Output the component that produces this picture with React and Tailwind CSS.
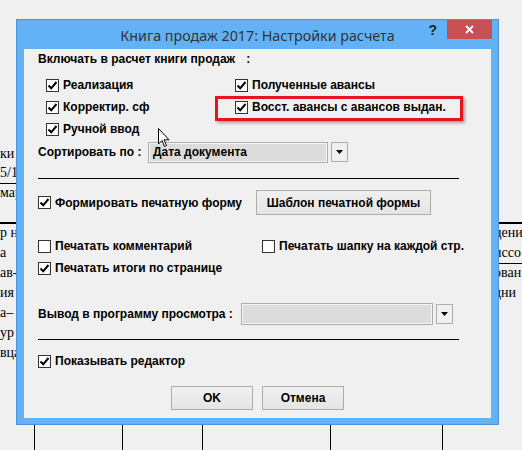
import React from 'react';

const SANS = { fontFamily: '"Liberation Sans", Arial, sans-serif' };

function Check({ checked }) {
  return (
    <span className="w-[13px] h-[13px] border border-[#333] bg-white flex items-center justify-center shrink-0">
      {checked && (
        <svg width="11" height="11" viewBox="0 0 11 11">
          <path d="M1.5 5.5 L4.2 8.3 L9.5 2" fill="none" stroke="#000" strokeWidth="2" />
        </svg>
      )}
    </span>
  );
}

function Box({ label, checked }) {
  return (
    <div className="flex items-center gap-[4px] h-[22px]">
      <Check checked={checked} />
      <span className="text-[12px] font-bold text-black leading-none whitespace-nowrap">{label}</span>
    </div>
  );
}

function DropBtn() {
  return (
    <div className="w-[17px] h-[20px] border border-[#adadad] bg-[#f0f0f0] flex items-center justify-center ml-[3px]">
      <svg width="7" height="4" viewBox="0 0 7 4"><path d="M0 0 H7 L3.5 4 Z" fill="#000" /></svg>
    </div>
  );
}

function Btn({ children, className }) {
  return (
    <div className={`border border-[#acacac] bg-gradient-to-b from-[#f0f0f0] to-[#e5e5e5] flex items-center justify-center text-[12px] font-bold text-black ${className}`}>
      {children}
    </div>
  );
}

export default function App() {
  return (
    <div className="relative w-[522px] h-[450px] overflow-hidden bg-[#f0f0f0]" style={SANS}>
      {/* документ на заднем плане */}
      <div className="absolute inset-0 text-[14px] text-black leading-none" style={{ fontFamily: '"Liberation Serif", serif' }}>
        <div className="absolute left-0 top-[147px]">ки</div>
        <div className="absolute left-0 top-[166px]">5/1</div>
        <div className="absolute left-0 top-[183px] w-[20px] h-px bg-black" />
        <div className="absolute left-0 top-[186px]">мар</div>
        <div className="absolute left-0 top-[222px] w-[20px] h-[2px] bg-black" />
        <div className="absolute left-0 top-[226px]">р н</div>
        <div className="absolute left-0 top-[246px]">а</div>
        <div className="absolute left-0 top-[266px]">ав-</div>
        <div className="absolute left-0 top-[286px]">ия</div>
        <div className="absolute left-0 top-[306px]">а–</div>
        <div className="absolute left-0 top-[326px]">ур</div>
        <div className="absolute left-0 top-[346px]">вца</div>

        <div className="absolute left-[490px] top-[222px] w-[40px] h-[2px] bg-black" />
        <div className="absolute left-[494px] top-[226px]">цени</div>
        <div className="absolute left-[494px] top-[246px]">иссо</div>
        <div className="absolute left-[490px] top-[263px] w-[40px] h-px bg-black" />
        <div className="absolute left-[494px] top-[266px]">ован</div>
        <div className="absolute left-[494px] top-[286px]">дни</div>

        <div className="absolute left-[34px] top-[420px] w-px h-[30px] bg-black" />
        <div className="absolute left-[122px] top-[420px] w-px h-[30px] bg-black" />
        <div className="absolute left-[202px] top-[420px] w-px h-[30px] bg-black" />
        <div className="absolute left-[330px] top-[420px] w-px h-[30px] bg-black" />
        <div className="absolute left-[442px] top-[420px] w-px h-[30px] bg-black" />
      </div>

      {/* диалог */}
      <div className="absolute left-[16px] top-[19px] w-[483px] h-[406px] bg-[#64b2f6] border border-[#4d94d8] flex flex-col">
        <div className="relative h-[29px] flex justify-center shrink-0">
          <span className="text-[14.3px] text-[#333] leading-none mt-[9px]" style={{ fontFamily: '"Noto Sans", "Open Sans", sans-serif' }}>
            Книга продаж 2017: Настройки расчета
          </span>
          <div className="absolute right-[6px] top-0 flex items-start">
            <span className="text-[14px] font-bold text-[#222] mt-[3px] mr-[10px] leading-none">?</span>
            <div className="w-[45px] h-[19px] bg-[#c75050] flex items-center justify-center">
              <svg width="9" height="9" viewBox="0 0 9 9"><path d="M1 1 L8 8 M8 1 L1 8" stroke="#fff" strokeWidth="1.8" /></svg>
            </div>
          </div>
        </div>

        <div className="relative mx-[7px] w-[467px] h-[369px] bg-[#f0f0f0] flex flex-col text-black">
          <div className="h-[20px] flex items-center pl-[14px] text-[12px] font-bold leading-none">
            <span>Включать в расчет книги продаж</span>
            <span className="ml-[11px]">:</span>
          </div>

          <div className="mt-[5px] pl-[22px] grid grid-cols-[189px_1fr]">
            <Box label="Реализация" checked />
            <Box label="Полученные авансы" checked />
            <Box label="Корректир. сф" checked />
            <Box label="Восст. авансы с авансов выдан." checked />
            <Box label="Ручной ввод" checked />
          </div>

          <div className="mt-[1px] h-[22px] flex items-center pl-[14px]">
            <span className="w-[110px] text-[12px] font-bold leading-none">Сортировать по :</span>
            <div className="w-[180px] h-[21px] border border-[#adadad] bg-[#dcdcdc] shadow-[inset_0_0_0_1px_#f4f4f4] flex items-center pl-[4px] text-[12px] font-bold leading-none">
              Дата документа
            </div>
            <DropBtn />
          </div>

          <div className="mt-[15px] ml-[14px] w-[421px] h-px bg-black" />

          <div className="mt-[11px] h-[25px] flex items-center pl-[14px]">
            <div className="w-[218px]"><Box label="Формировать печатную форму" checked /></div>
            <Btn className="w-[175px] h-[25px]">Шаблон печатной формы</Btn>
          </div>

          <div className="mt-[20px] pl-[14px] grid grid-cols-[224px_1fr]">
            <Box label="Печатать комментарий" />
            <Box label="Печатать шапку на каждой стр." />
            <Box label="Печатать итоги по странице" checked />
          </div>

          <div className="mt-[24px] h-[22px] flex items-center pl-[14px]">
            <span className="w-[203px] text-[12px] font-bold leading-none">Вывод в программу просмотра :</span>
            <div className="w-[192px] h-[22px] border border-[#adadad] bg-[#dcdcdc] shadow-[inset_0_0_0_1px_#f4f4f4]" />
            <DropBtn />
          </div>

          <div className="mt-[14px] ml-[14px] w-[421px] h-px bg-black" />

          <div className="mt-[10px] pl-[14px]">
            <Box label="Показывать редактор" checked />
          </div>

          <div className="mt-[14px] flex justify-center gap-[9px]">
            <Btn className="w-[82px] h-[24px]">OK</Btn>
            <Btn className="w-[82px] h-[24px]">Отмена</Btn>
          </div>

          {/* выделение */}
          <div className="absolute left-[191px] top-[47px] w-[248px] h-[25px] border-[3px] border-[#e8141b] shadow-[2px_2px_3px_rgba(0,0,0,0.35)]" />

          {/* курсор */}
          <svg className="absolute left-[134px] top-[79px]" width="12" height="20" viewBox="0 0 12 20">
            <path d="M0.5 0.5 V16 L4 12.5 L6.5 18.5 L8.5 17.5 L6 11.8 H11 Z" fill="#fff" stroke="#000" strokeWidth="1" />
          </svg>
        </div>
      </div>
    </div>
  );
}
